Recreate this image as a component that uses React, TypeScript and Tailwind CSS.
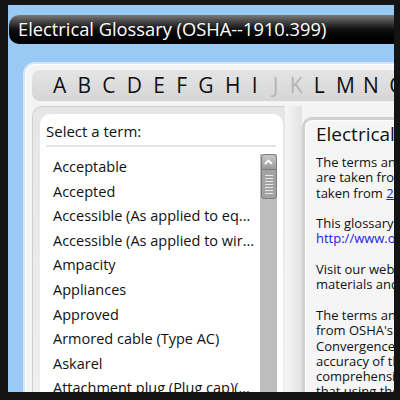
const letters = "ABCDEFGHIJKLMNOPQRSTUVWXYZ".split("");
const disabled = new Set(["J", "K"]);
const nudge: Record<string, string> = { J: "ml-[4px]", N: "-ml-[3px]", O: "-ml-[1px]" };

const terms = [
  "Acceptable",
  "Accepted",
  "Accessible (As applied to eq...",
  "Accessible (As applied to wir...",
  "Ampacity",
  "Appliances",
  "Approved",
  "Armored cable (Type AC)",
  "Askarel",
  "Attachment plug (Plug cap)(...",
];

export default function App() {
  return (
    <div
      className="h-[400px] w-[400px] overflow-hidden bg-[#141414] pb-[8px] pl-[8px] pr-[6px] pt-[5px]"
      style={{ fontFamily: '"Open Sans", "Noto Sans", sans-serif' }}
    >
      <div className="flex h-full flex-col overflow-hidden bg-[#9bc9f5]">
        {/* title bar */}
        <div className="ml-[1px] mt-[10px] flex h-[29px] shrink-0 items-center rounded-l-[10px] bg-gradient-to-b from-[#7a7a7a] via-[#111] to-black pl-[9px]">
          <span className="whitespace-nowrap text-[18.3px] leading-none text-white">
            Electrical Glossary (OSHA--1910.399)
          </span>
        </div>

        {/* main panel */}
        <div className="ml-[15px] mt-[18px] flex min-h-0 flex-1 flex-col rounded-tl-[12px] border-l-2 border-t-2 border-[#d6e6f6] bg-[#f4f4f4] pl-[7px] pt-[6px] shadow-[inset_1px_1px_0_#ffffff]">
          {/* letters */}
          <div className="flex h-[31px] shrink-0 items-center gap-[11.25px] whitespace-nowrap rounded-l-[8px] bg-gradient-to-b from-[#e4e4e4] to-[#d6d6d6] pl-[21px] text-[21px] leading-none">
            {letters.map((l) => (
              <span
                key={l}
                className={(disabled.has(l) ? "text-[#b4b4b4] " : "text-[#111] ") + (nudge[l] ?? "")}
              >
                {l}
              </span>
            ))}
          </div>

          <div className="mt-[5px] flex min-h-0 flex-1">
            {/* left term list */}
            <div className="flex w-[253px] shrink-0 flex-col rounded-tl-[10px] border-l border-t border-[#cfcfcf] bg-gradient-to-b from-[#e6e6e6] to-[#eeeeee] pl-[7px] pr-[2px] pt-[7px]">
              <div className="flex min-h-0 flex-1 flex-col rounded-t-[10px] bg-white pl-[6px] pr-[6px]">
                <div className="pt-[7px] text-[15px] leading-[20px] text-[#111]">Select a term:</div>
                <div className="mr-px mt-[4px] h-[2px] bg-[#e4e4e4]" />
                <div className="mt-[7px] flex min-h-0 flex-1">
                  <ul className="mt-[1px] flex-1 pl-[7px] text-[14.5px] leading-[24.6px] text-[#111]">
                    {terms.map((t) => (
                      <li key={t} className="whitespace-nowrap">
                        {t}
                      </li>
                    ))}
                  </ul>
                  {/* scrollbar */}
                  <div className="flex w-[17px] shrink-0 flex-col items-center bg-[#bdbdbd]">
                    <div className="flex h-[16px] w-[16px] items-center justify-center rounded-t-[4px] border border-[#7c7c7c] bg-gradient-to-b from-[#c8c8c8] to-[#9a9a9a]">
                      <svg width="9" height="6" viewBox="0 0 9 6">
                        <path d="M1 5L4.5 1.5L8 5" stroke="#fff" strokeWidth="1.8" fill="none" />
                      </svg>
                    </div>
                    <div className="flex h-[29px] w-[16px] flex-col justify-center gap-[2px] rounded-b-[4px] border border-t-0 border-[#7c7c7c] bg-[#a3a3a3] px-[3px]">
                      {[0, 1, 2, 3, 4, 5, 6].map((i) => (
                        <div key={i} className="h-[1px] bg-[#e8e8e8]" />
                      ))}
                    </div>
                  </div>
                </div>
              </div>
            </div>

            {/* gutter */}
            <div className="w-[17px] shrink-0 bg-gradient-to-r from-[#f6f6f6] to-[#e2e2e2]" />

            {/* right detail */}
            <div className="mt-[11px] flex min-w-0 flex-1 flex-col rounded-tl-[10px] border-l-[3px] border-t-[3px] border-[#d0d0d0] bg-[#f5f5f5] pl-[11px] shadow-[inset_1px_1px_0_#ffffff]">
              <div className="whitespace-nowrap pt-[1px] text-[19px] leading-[26px] text-[#111]">
                Electrical Glossary
              </div>
              <div className="-ml-[3px] mt-[2px] h-px bg-[#9a9a9a]" />
              <div className="whitespace-nowrap pt-[6px] text-[13px] leading-[15.3px] text-[#111]">
                <p>The terms and definitions</p>
                <p>are taken from OSHA and</p>
                <p>
                  taken from <span className="text-[#1a1aee] underline">29 CFR</span>
                </p>
                <p className="mt-[15.3px]">This glossary</p>
                <p className="text-[#1a1aee]">http://www.osha.gov</p>
                <p className="mt-[15.3px]">Visit our website for</p>
                <p>materials and</p>
                <p className="mt-[15.3px]">The terms and</p>
                <p>from OSHA's</p>
                <p>Convergence</p>
                <p>accuracy of the</p>
                <p>comprehensive</p>
                <p>that using the</p>
              </div>
            </div>
          </div>
        </div>
      </div>
    </div>
  );
}
